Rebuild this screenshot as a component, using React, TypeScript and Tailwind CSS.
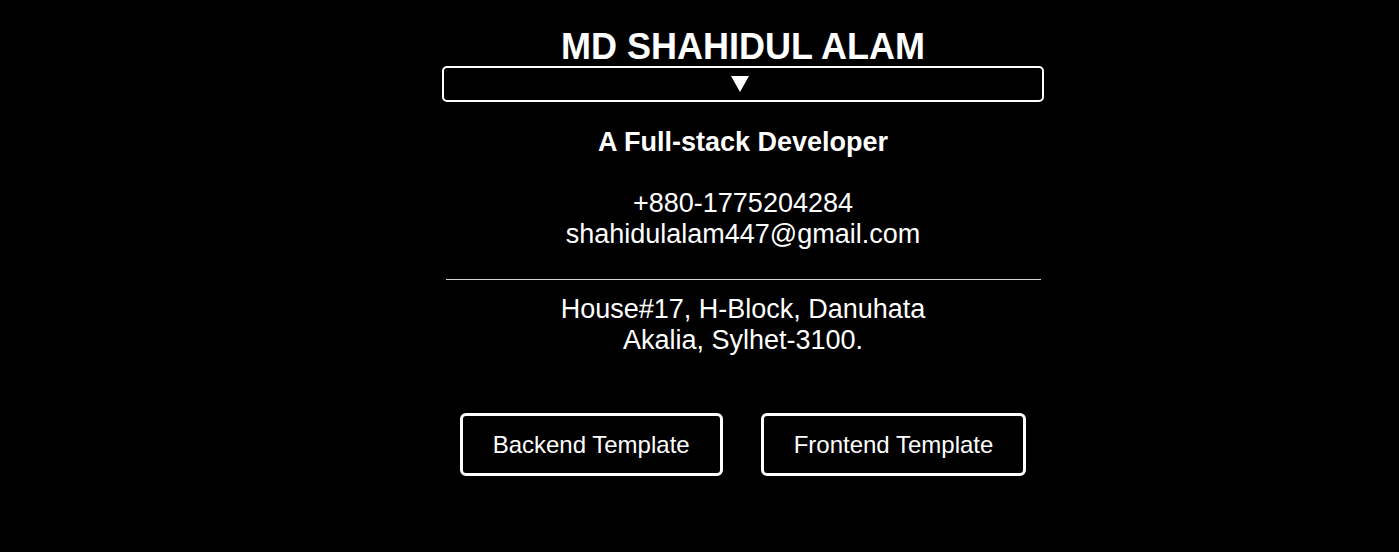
const font = { fontFamily: '"Liberation Sans", Arial, sans-serif' };

export default function App() {
  return (
    <div className="min-h-[552px] w-full bg-black text-white" style={font}>
      <div className="ml-[442px] flex w-[602px] flex-col items-center pt-[27px] text-center">
        <h1 className="text-[36px] leading-[39px] font-bold">MD SHAHIDUL ALAM</h1>

        <div className="flex h-[36px] w-full items-center justify-center rounded-[5px] border-2 border-white">
          <svg width="18" height="16" viewBox="0 0 18 16" className="-ml-[6px]">
            <polygon points="0,0 18,0 9,16" fill="white" />
          </svg>
        </div>

        <h2 className="mt-[25px] text-[27px] leading-[31px] font-bold">A Full-stack Developer</h2>

        <div className="mt-[30px] text-[27px] leading-[31px]">
          <p>+880-1775204284</p>
          <p>shahidulalam447@gmail.com</p>
        </div>

        <hr className="mt-[29px] w-[595px] border-t border-[#d4d4d4]" />

        <div className="mt-[14px] text-[27px] leading-[31px]">
          <p>House#17, H-Block, Danuhata</p>
          <p>Akalia, Sylhet-3100.</p>
        </div>

        <div className="mt-[57px] flex gap-[38px]">
          <button className="rounded-[6px] border-[3px] border-white px-[30px] py-[15px] text-[24px] leading-[27px]">
            Backend Template
          </button>
          <button className="rounded-[6px] border-[3px] border-white px-[30px] py-[15px] text-[24px] leading-[27px]">
            Frontend Template
          </button>
        </div>
      </div>
    </div>
  );
}
